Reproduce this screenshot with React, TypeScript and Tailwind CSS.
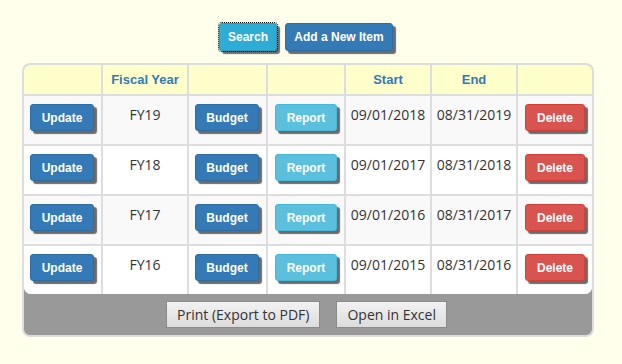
const rows = [
  { fy: "FY19", start: "09/01/2018", end: "08/31/2019" },
  { fy: "FY18", start: "09/01/2017", end: "08/31/2018" },
  { fy: "FY17", start: "09/01/2016", end: "08/31/2017" },
  { fy: "FY16", start: "09/01/2015", end: "08/31/2016" },
];

const btn =
  "rounded-[3px] border text-white font-bold text-[12px] font-['Liberation_Sans',Arial,sans-serif] shadow-[3px_3px_1px_#6b6b6b]";
const blue = btn + " h-[27px] bg-[#337ab7] border-[#2e6da4]";
const info = btn + " h-[27px] bg-[#5bc0de] border-[#46b8da]";
const red = btn + " h-[27px] bg-[#d9534f] border-[#d43f3a]";

const headers = ["", "Fiscal Year", "", "", "Start", "End", ""];

const App = () => {
  return (
    <div className="min-h-[364px] w-[622px] bg-[#ffffec] pt-[23px] font-['Open_Sans',sans-serif] text-[14px] text-[#333]">
      <div className="ml-[22px] w-[572px]">
        {/* top buttons */}
        <div className="flex justify-center gap-[8px] pr-[4px]">
          <button className={btn + " h-[28px] w-[58px] bg-[#2dadd6] border-[#269abc] outline-1 outline-dotted outline-black outline-offset-0"}>
            Search
          </button>
          <button className={btn + " h-[28px] w-[108px] bg-[#337ab7] border-[#2e6da4]"}>Add a New Item</button>
        </div>

        {/* table */}
        <div className="mt-[12px] rounded-[8px] border-2 border-[#ddd] bg-[#999] overflow-hidden">
          <div className="grid grid-cols-[77px_84px_77px_76px_84px_84px_74px] gap-[2px] bg-[#ddd] rounded-b-[7px] overflow-hidden">
            {headers.map((h, i) => (
              <div
                key={"h" + i}
                className="h-[29px] bg-[#ffffcc] flex items-center justify-center text-[#337ab7] font-bold text-[13px] font-['Liberation_Sans',Arial,sans-serif]"
              >
                {h}
              </div>
            ))}
            {rows.map((r, i) => {
              const bg = i % 2 === 0 ? "bg-[#f9f9f9]" : "bg-white";
              const cell = "h-[48px] pt-[8px] " + bg;
              return [
                <div key={r.fy + "a"} className={cell + " pl-[6px]"}>
                  <button className={blue + " w-[64px]"}>Update</button>
                </div>,
                <div key={r.fy + "b"} className={cell + " text-center"}>
                  {r.fy}
                </div>,
                <div key={r.fy + "c"} className={cell + " pl-[6px]"}>
                  <button className={blue + " w-[64px]"}>Budget</button>
                </div>,
                <div key={r.fy + "d"} className={cell + " pl-[7px]"}>
                  <button className={info + " w-[62px]"}>Report</button>
                </div>,
                <div key={r.fy + "e"} className={cell + " text-center"}>
                  {r.start}
                </div>,
                <div key={r.fy + "f"} className={cell + " text-center"}>
                  {r.end}
                </div>,
                <div key={r.fy + "g"} className={cell + " pl-[7px]"}>
                  <button className={red + " w-[60px]"}>Delete</button>
                </div>,
              ];
            })}
          </div>
          {/* footer */}
          <div className="flex justify-center gap-[16px] pt-[7px] pb-[7px] pr-[3px]">
            <button className="h-[27px] px-[10px] border border-[#8a8a8a] bg-gradient-to-b from-[#f2f2f2] to-[#dcdcdc] text-[#333]">
              Print (Export to PDF)
            </button>
            <button className="h-[27px] px-[10px] border border-[#8a8a8a] bg-gradient-to-b from-[#f2f2f2] to-[#dcdcdc] text-[#333]">
              Open in Excel
            </button>
          </div>
        </div>
      </div>
    </div>
  );
};

export default App;
